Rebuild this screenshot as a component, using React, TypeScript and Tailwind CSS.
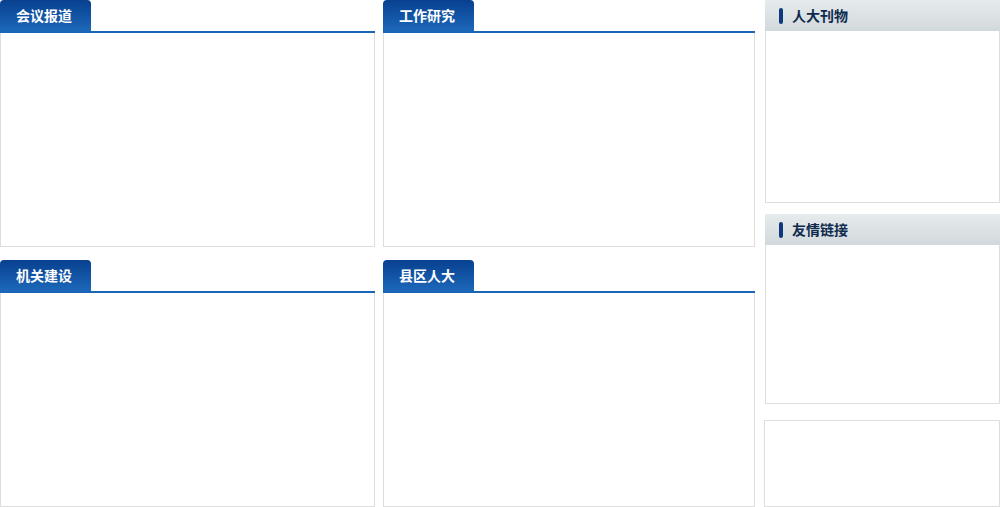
import React from "react";

const font = { fontFamily: '"Noto Sans CJK SC", "Noto Sans", sans-serif' };

function TabPanel({ title, width }: { title: string; width: string }) {
  return (
    <div className={`flex flex-col ${width} h-[247px]`}>
      <div className="flex h-[31px]">
        <div className="w-[91px] h-full rounded-t-[4px] bg-gradient-to-b from-[#08408f] to-[#1d68ba] flex items-center pl-[16px] text-white text-[14px] font-bold">
          {title}
        </div>
      </div>
      <div className="h-[2px] bg-[#1b65b6]" />
      <div className="flex-1 border border-t-0 border-[#dedede] bg-white" />
    </div>
  );
}

function SidePanel({ title, height }: { title: string; height: string }) {
  return (
    <div className={`flex flex-col ${height}`}>
      <div className="h-[31px] bg-gradient-to-b from-[#e6ebed] to-[#d2d9dc] flex items-center pl-[14px]">
        <div className="w-[4px] h-[16px] rounded-full bg-[#0c3a7c]" />
        <span className="ml-[9px] text-[14px] font-bold text-[#0f2a4e]">{title}</span>
      </div>
      <div className="flex-1 border border-t-0 border-[#dedede] bg-white" />
    </div>
  );
}

export default function App() {
  return (
    <div className="w-[1000px] h-[507px] bg-white flex" style={font}>
      <div className="flex flex-col gap-[13px] w-[375px]">
        <TabPanel title="会议报道" width="w-[375px]" />
        <TabPanel title="机关建设" width="w-[375px]" />
      </div>
      <div className="flex flex-col gap-[13px] w-[372px] ml-[8px]">
        <TabPanel title="工作研究" width="w-[372px]" />
        <TabPanel title="县区人大" width="w-[372px]" />
      </div>
      <div className="flex flex-col w-[236px] ml-[9px]">
        <div className="pl-[1px]">
          <SidePanel title="人大刊物" height="h-[203px]" />
        </div>
        <div className="pl-[1px] mt-[11px]">
          <SidePanel title="友情链接" height="h-[190px]" />
        </div>
        <div className="mt-[16px] h-[87px] border border-[#dedede] bg-white" />
      </div>
    </div>
  );
}
